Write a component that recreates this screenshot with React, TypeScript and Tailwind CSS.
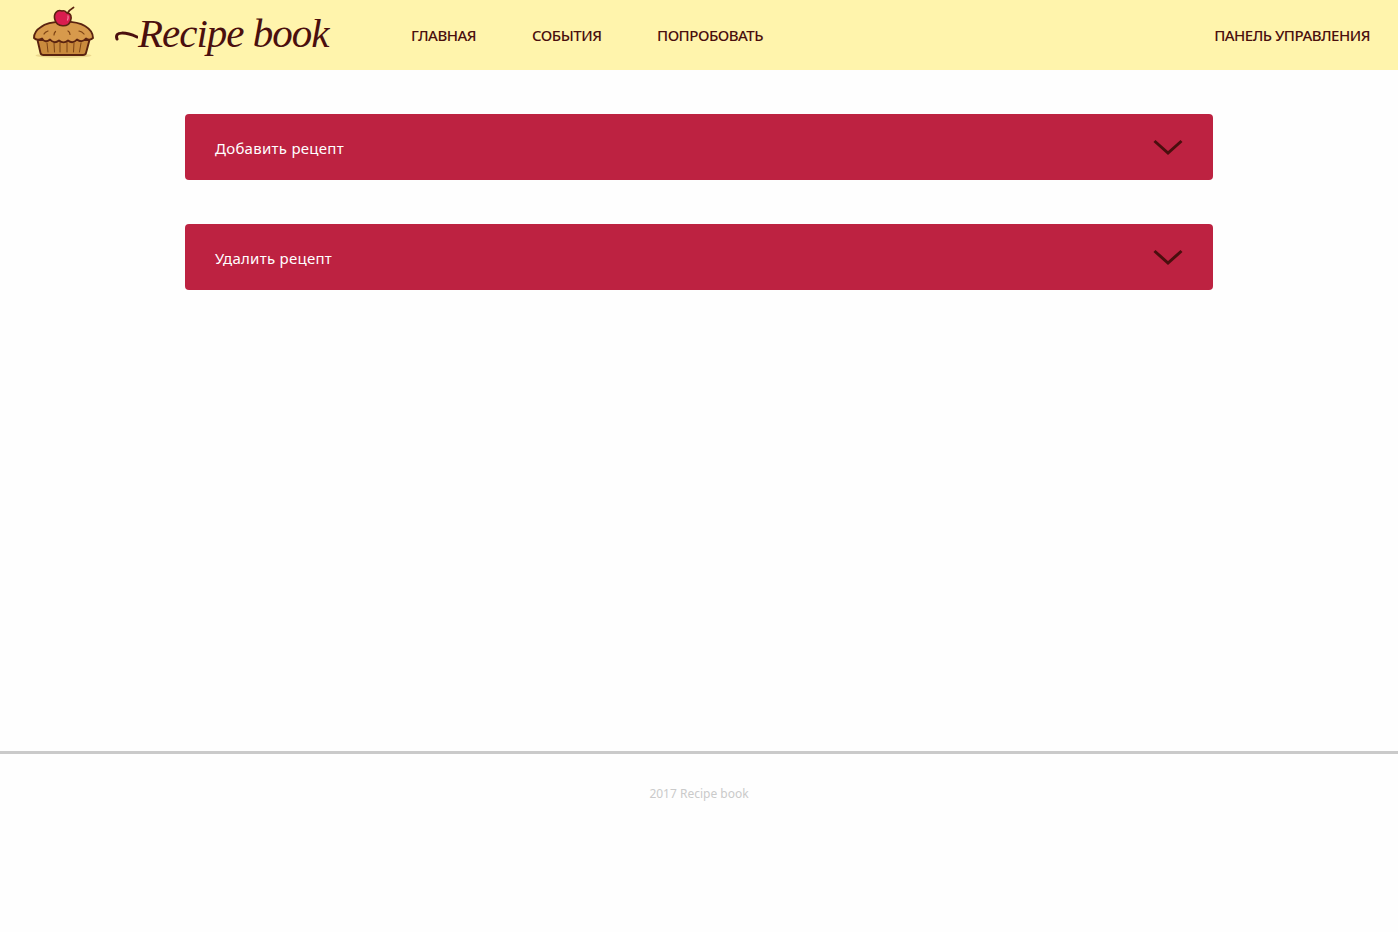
import { useState } from "react";

const navItems = [
  { label: "ГЛАВНАЯ", box: "w-[65px]" },
  { label: "СОБЫТИЯ", box: "w-[69px]" },
  { label: "ПОПРОБОВАТЬ", box: "w-[107px]" },
];

function PieIcon() {
  return (
    <svg className="block h-[55px] w-[68px]" viewBox="0 0 68 55" fill="none" strokeLinecap="round" strokeLinejoin="round">
      <ellipse cx="33.500" cy="51.500" rx="28" ry="2.500" fill="#ecd98e" />
      <path d="M7.500 36 L10.500 49 Q11 51 13.500 51 H53 Q55.500 51 56 49 L59.500 36 Z" fill="#c98a3d" stroke="#5a2310" strokeWidth="1.900" />
      <path d="M17 39l1 9M24 39l.5 9M30 38v10M37 38v10M44 39l-.5 9M51 39l-1.500 9" stroke="#7d4315" strokeWidth="1" />
      <path d="M4 34 C4 30 6 26 11 23 C19 16 46 16 55 22 C60 25 63 29 63 34 C61 36 58 36 56 34.500 C53 38 50 38 47 35.500 C44 39 41 39 38 36.500 C35 39 32 39 29 36.500 C26 39 23 39 20 35.500 C17 38 14 38 12 34.500 C9 36 6 36 4 34Z" fill="#d79a4c" stroke="#5a2310" strokeWidth="1.900" />
      <path d="M14 30 q1-2 4-3M24 31q0-2 1.500-3.500M38 27q2 1 2 3.500M49 27q3 .5 5 3" stroke="#7d4315" strokeWidth="1.200" />
      <path d="M37 10 Q39 6 43.500 3.500" stroke="#5a2310" strokeWidth="1.800" />
      <path d="M25 16 C23 10 27 5 32 7 C35 6 36 8 37 9 C41 9 42 13 40.500 17 C38 24 27 23 25 16Z" fill="#d91d4f" stroke="#5a2310" strokeWidth="1.600" />
      <path d="M38 12 q.5 2-.5 4" stroke="#f47998" strokeWidth="1.300" />
    </svg>
  );
}

function Panel({ title }: { title: string }) {
  const [open, setOpen] = useState(false);
  return (
    <button
      onClick={() => setOpen(!open)}
      className="flex h-[66px] w-full items-center justify-between rounded bg-[#bd2241] px-[30px] text-left text-white"
    >
      <span className="pt-px font-['Noto_Sans','Open_Sans',sans-serif] text-[15px] leading-6 tracking-[0.27px] whitespace-nowrap">{title}</span>
      <svg className="h-[18px] w-[30px]" viewBox="0 0 30 18" fill="none" stroke="#4a0f0e" strokeWidth="3">
        <path d="M1.500 3 15 15 28.500 3" />
      </svg>
    </button>
  );
}

export default function App() {
  return (
    <div className="flex min-h-[932px] flex-col bg-[#fefefe] font-['Noto_Sans','Open_Sans',sans-serif]">
      <header className="flex h-[70px] items-center bg-[#fff4ac] pr-7 pl-[30px] text-[#4a0f0e]">
        <div className="flex h-full w-[381px] shrink-0 items-start">
          <div className="w-[84px] pt-1">
            <PieIcon />
          </div>
          <div className="flex pt-2">
            <svg className="h-[50px] w-[24px] shrink-0" viewBox="0 0 24 50" fill="none" stroke="currentColor" strokeLinecap="round">
              <path d="M3 31 C0 23 12 24 23 29" strokeWidth="3" />
            </svg>
            <span className="font-['Liberation_Serif',serif] text-[41px] leading-[50px] tracking-[-1px] whitespace-nowrap italic">Recipe book</span>
          </div>
        </div>
        <nav className="flex gap-14 text-[15px] leading-5 font-medium tracking-[-0.5px] whitespace-nowrap">
          {navItems.map((item) => (
            <a key={item.label} href="#" className={item.box}>
              {item.label}
            </a>
          ))}
        </nav>
        <a href="#" className="ml-auto text-[15px] leading-5 font-medium tracking-[-0.5px] whitespace-nowrap">
          ПАНЕЛЬ УПРАВЛЕНИЯ
        </a>
      </header>
      <main className="mx-auto flex h-[681px] w-[1028px] flex-col gap-11 pt-11">
        <Panel title="Добавить рецепт" />
        <Panel title="Удалить рецепт" />
      </main>
      <footer className="border-t-[3px] border-[#cacaca] pt-[30px] text-center text-[12px] leading-5 text-[#cacaca]">
        2017 Recipe book
      </footer>
    </div>
  );
}
